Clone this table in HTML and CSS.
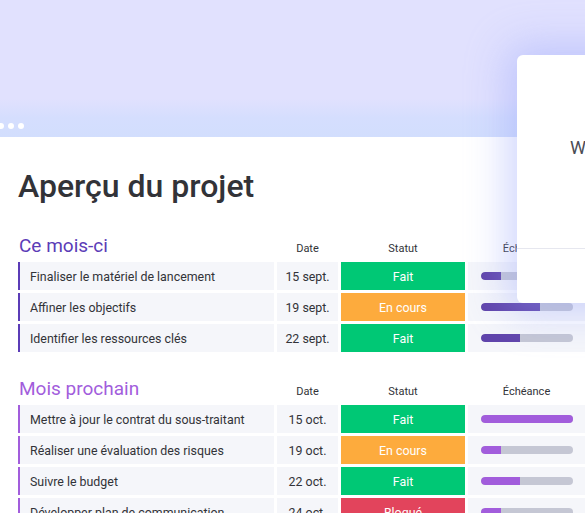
FILE: index.html
```html
<!DOCTYPE html>
<html lang="fr">
<head>
<meta charset="utf-8">
<link rel="stylesheet" href="styles.css">
</head>
<body>
<div class="page">
  <div class="hero">
    <div class="dots"><span></span><span></span><span></span></div>
  </div>
  <main class="content">
    <h1 class="title">Aperçu du projet</h1>

    <section class="group g1">
      <div class="head">
        <div class="gname">Ce mois-ci</div>
        <div class="hcol">Date</div>
        <div class="hcol">Statut</div>
        <div class="hcol">Échéance</div>
      </div>
      <div class="row">
        <div class="cell name">Finaliser le matériel de lancement</div>
        <div class="cell date">15 sept.</div>
        <div class="cell status done">Fait</div>
        <div class="cell due"><div class="track"><div class="fill" style="width:22%"></div></div></div>
      </div>
      <div class="row">
        <div class="cell name">Affiner les objectifs</div>
        <div class="cell date">19 sept.</div>
        <div class="cell status work">En cours</div>
        <div class="cell due"><div class="track"><div class="fill" style="width:65%"></div></div></div>
      </div>
      <div class="row">
        <div class="cell name">Identifier les ressources clés</div>
        <div class="cell date">22 sept.</div>
        <div class="cell status done">Fait</div>
        <div class="cell due"><div class="track"><div class="fill" style="width:43%"></div></div></div>
      </div>
    </section>

    <section class="group g2">
      <div class="head">
        <div class="gname">Mois prochain</div>
        <div class="hcol">Date</div>
        <div class="hcol">Statut</div>
        <div class="hcol">Échéance</div>
      </div>
      <div class="row">
        <div class="cell name">Mettre à jour le contrat du sous-traitant</div>
        <div class="cell date">15 oct.</div>
        <div class="cell status done">Fait</div>
        <div class="cell due"><div class="track"><div class="fill" style="width:100%"></div></div></div>
      </div>
      <div class="row">
        <div class="cell name">Réaliser une évaluation des risques</div>
        <div class="cell date">19 oct.</div>
        <div class="cell status work">En cours</div>
        <div class="cell due"><div class="track"><div class="fill" style="width:22%"></div></div></div>
      </div>
      <div class="row">
        <div class="cell name">Suivre le budget</div>
        <div class="cell date">22 oct.</div>
        <div class="cell status done">Fait</div>
        <div class="cell due"><div class="track"><div class="fill" style="width:43%"></div></div></div>
      </div>
      <div class="row">
        <div class="cell name">Développer plan de communication</div>
        <div class="cell date">24 oct.</div>
        <div class="cell status stuck">Bloqué</div>
        <div class="cell due"><div class="track"><div class="fill" style="width:22%"></div></div></div>
      </div>
    </section>
  </main>

  <div class="card">
    <div class="card-top"><span class="card-word">W</span></div>
    <div class="card-bottom"></div>
  </div>
</div>
</body>
</html>
```

FILE: styles.css
```css
* { box-sizing: border-box; }
html, body {
  margin: 0;
  padding: 0;
  background: #ffffff;
  overflow: hidden;
}
body {
  font-family: Roboto, "Liberation Sans", sans-serif;
  color: #323338;
  width: 585px;
  height: 513px;
}
.page {
  position: relative;
  width: 585px;
  height: 513px;
  overflow: hidden;
}
.hero {
  height: 137px;
  background: linear-gradient(180deg, #e1e1fe 0%, #e1e1fe 72%, #d5defe 86%, #d2defd 100%);
  display: flex;
  align-items: flex-end;
  padding: 0 0 8px 0;
}
.dots {
  display: flex;
  gap: 4px;
  margin-left: -2px;
}
.dots span {
  width: 6px;
  height: 6px;
  border-radius: 50%;
  background: #ffffff;
}
.content {
  padding-left: 18px;
}
.title {
  margin: 30px 0 0 0;
  font-size: 32px;
  font-weight: 500;
  line-height: 38px;
  color: #323338;
}
.group {
  display: flex;
  flex-direction: column;
  gap: 3px;
}
.g1 { margin-top: 28px; }
.g2 { margin-top: 24px; }
.head, .row {
  display: grid;
  grid-template-columns: 256px 61px 124px 117px;
  column-gap: 3px;
}
.head {
  align-items: end;
  height: 24px;
  margin-bottom: 2px;
}
.gname {
  font-size: 19px;
  line-height: 22px;
  padding-left: 1px;
}
.g1 .gname { color: #5b3cb7; }
.g2 .gname { color: #a25ddc; }
.hcol {
  font-size: 11px;
  line-height: 14px;
  text-align: center;
  color: #323338;
  padding-bottom: 1px;
}
.row { height: 28px; }
.cell {
  background: #f5f6fa;
  display: flex;
  align-items: center;
  font-size: 12.4px;
}
.name {
  padding-left: 10px;
  border-left: 2px solid;
}
.g1 .name { border-left-color: #5b3cb7; }
.g2 .name { border-left-color: #a25ddc; }
.date {
  justify-content: center;
}
.status {
  justify-content: center;
  color: #ffffff;
}
.done { background: #00c875; }
.work { background: #fdab3d; }
.stuck { background: #e2445c; }
.due {
  justify-content: center;
}
.track {
  width: 92px;
  height: 8px;
  border-radius: 4px;
  background: #c5c7d4;
  overflow: hidden;
}
.fill {
  height: 100%;
  border-radius: 4px 0 0 4px;
}
.g1 .fill { background: #6044ab; }
.g2 .fill { background: #a25ddc; }
.card {
  position: absolute;
  left: 517px;
  top: 55px;
  width: 120px;
  height: 248px;
  background: #ffffff;
  border-radius: 6px;
  box-shadow: 0 0 40px 10px rgba(150, 165, 250, 0.45);
  display: flex;
  flex-direction: column;
}
.card-top {
  height: 194px;
  border-bottom: 1px solid #e6e7ef;
  padding: 82px 0 0 53px;
}
.card-word {
  font-size: 18px;
  color: #4b4c55;
}
```
